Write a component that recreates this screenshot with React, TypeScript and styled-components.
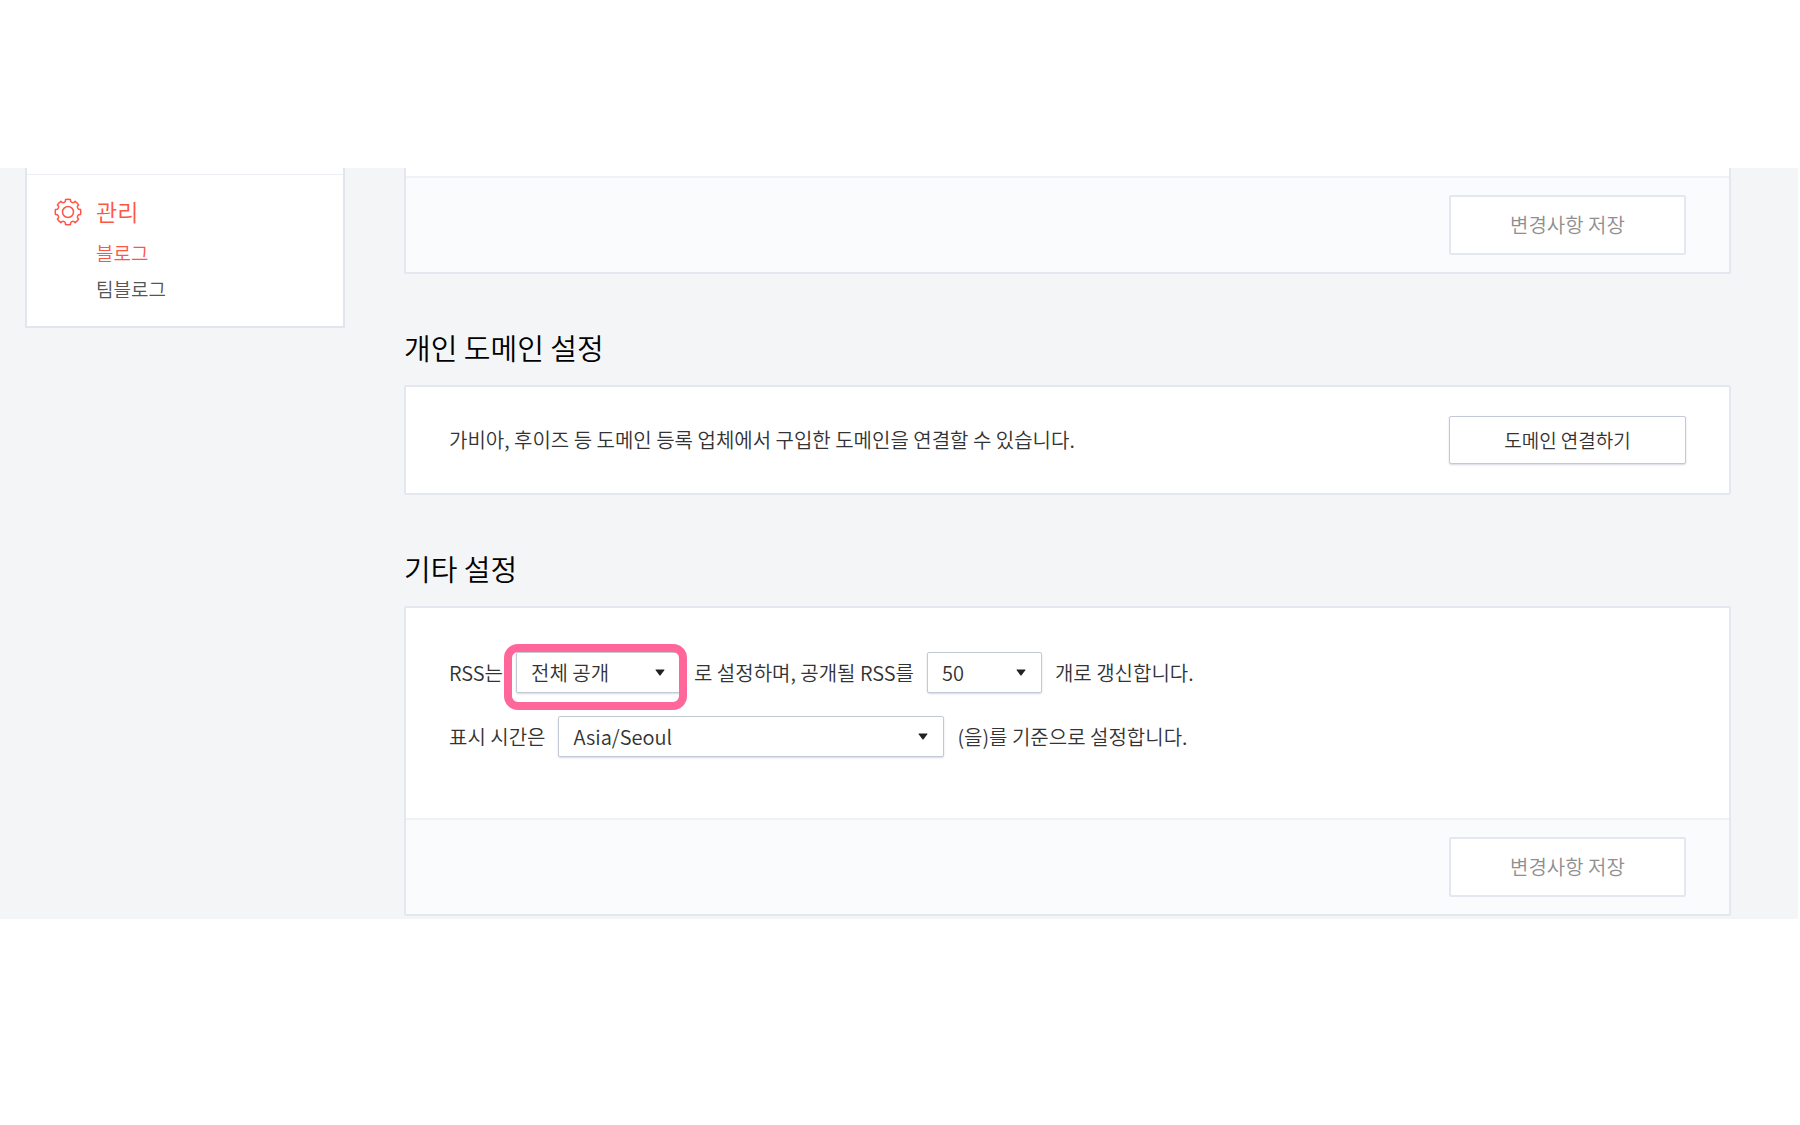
import React from "react";
import styled, { createGlobalStyle } from "styled-components";

const GlobalStyle = createGlobalStyle`
  *, *::before, *::after { box-sizing: border-box; }
  body {
    margin: 0;
    background: #fff;
    color: #333;
    font-family: "Noto Sans CJK KR", "Noto Sans", sans-serif;
    font-size: 20px;
    font-weight: 350;
    line-height: 30px;
  }
  button, select { font: inherit; color: inherit; }
`;

const Page = styled.div`
  padding: 168px 2px 206px 0;
`;

const Admin = styled.div`
  display: flex;
  align-items: flex-start;
  gap: 59px;
  padding: 0 67px 3px 25px;
  background: #f3f5f7;
`;

const Sidebar = styled.nav`
  flex: 0 0 320px;
  padding-top: 6px;
  background: #fff;
  border: solid #e1e5ee;
  border-width: 0 2px 2px;
`;

const MenuGroup = styled.section`
  display: grid;
  grid-template-columns: 28px 1fr;
  column-gap: 14px;
  align-items: center;
  padding: 18px 27px 19px;
  border-top: 1px solid #eceef3;
`;

const MenuTitle = styled.h2`
  margin: 0;
  padding-bottom: 2px;
  font-size: 23px;
  line-height: 36px;
  font-weight: inherit;
  color: #ff5544;
`;

const MenuList = styled.ul`
  grid-column: 2;
  margin: 4px 0 0;
  padding: 0;
  list-style: none;
`;

const MenuLink = styled.a<{ $active?: boolean }>`
  display: block;
  font-size: 19px;
  line-height: 36px;
  text-decoration: none;
  color: ${(p) => (p.$active ? "#ff5544" : "#555")};
`;

const Main = styled.main`
  flex: 1;
  min-width: 0;
`;

const Title = styled.h3`
  margin: 0;
  padding: 53px 0 18px;
  font-size: 29px;
  line-height: 40px;
  font-weight: inherit;
  color: #000;
`;

const Panel = styled.section<{ $cut?: boolean }>`
  background: #fff;
  border: 2px solid #e3e7ef;
  border-top-width: ${(p) => (p.$cut ? 0 : 2)}px;
  border-radius: ${(p) => (p.$cut ? "0 0 2px 2px" : "2px")};
  padding-top: ${(p) => (p.$cut ? 8 : 0)}px;
`;

const DomainRow = styled.div`
  display: flex;
  align-items: center;
  justify-content: space-between;
  padding: 29px 43px;
`;

const Text = styled.p`
  margin: 0;
`;

const Button = styled.button<{ $muted?: boolean }>`
  width: 237px;
  height: ${(p) => (p.$muted ? 60 : 48)}px;
  padding: 0;
  background: #fff;
  border: ${(p) => (p.$muted ? "2px solid #e3e7ef" : "1px solid #c3cad6")};
  border-radius: 2px;
  box-shadow: ${(p) => (p.$muted ? "none" : "0 1px 2px #d5dae2")};
  color: ${(p) => (p.$muted ? "#8f8f8f" : "#333")};
  font-size: ${(p) => (p.$muted ? 20 : 19)}px;
`;

const Footer = styled.footer`
  display: flex;
  justify-content: flex-end;
  padding: 17px 43px;
  background: #fafbfd;
  border-top: 2px solid #f0f1f4;
`;

const Form = styled.form`
  display: grid;
  gap: 23px;
  padding: 44px 43px 61px;
`;

const Row = styled.div`
  display: flex;
  align-items: center;
  gap: 13px;
`;

const SelectBox = styled.div<{ $width: number }>`
  position: relative;
  width: ${(p) => p.$width}px;
`;

const Select = styled.select`
  display: block;
  width: 100%;
  height: 41px;
  padding: 0 36px 0 14px;
  appearance: none;
  background: #fff;
  border: 1px solid #c3cad6;
  border-radius: 2px;
  box-shadow: 0 1px 2px #d5dae2;
`;

const Arrow = styled.svg`
  position: absolute;
  top: 17px;
  right: 16px;
  width: 10px;
  height: 7px;
  pointer-events: none;
`;

const Highlight = styled.span`
  position: absolute;
  inset: -8px -6px -17px -12px;
  border: 8px solid #ff6699;
  border-radius: 14px;
  pointer-events: none;
`;

const gearPath = (() => {
  const teeth = 8;
  const points: string[] = [];
  const at = (radius: number, degrees: number) => {
    const a = (degrees * Math.PI) / 180;
    return `${(14 + radius * Math.sin(a)).toFixed(2)} ${(14 - radius * Math.cos(a)).toFixed(2)}`;
  };
  for (let i = 0; i < teeth; i++) {
    const c = (i * 360) / teeth;
    points.push(`${i ? "L" : "M"}${at(12.8, c - 11)}`);
    points.push(`A12.8 12.8 0 0 1 ${at(12.8, c + 11)}`);
    points.push(`L${at(11, c + 14)}`);
    points.push(`Q${at(9.8, c + 22.5)} ${at(11, c + 31)}`);
  }
  return points.join(" ") + "Z";
})();

function GearIcon() {
  return (
    <svg width="28" height="28" viewBox="0 0 28 28" fill="none" stroke="#ff5544" strokeWidth="1.5" strokeLinejoin="round" aria-hidden="true">
      <path d={gearPath} />
      <circle cx="14" cy="14" r="5.5" />
    </svg>
  );
}

function Dropdown({ label, value, width, marked }: { label: string; value: string; width: number; marked?: boolean }) {
  return (
    <SelectBox $width={width}>
      <Select aria-label={label} defaultValue={value}>
        <option value={value}>{value}</option>
      </Select>
      <Arrow viewBox="0 0 10 7" aria-hidden="true">
        <path d="M1 0.5H9Q9.8 0.5 9.3 1.3L5.6 6.2Q5 6.9 4.4 6.2L0.7 1.3Q0.2 0.5 1 0.5Z" fill="#222" />
      </Arrow>
      {marked && <Highlight />}
    </SelectBox>
  );
}

export default function App() {
  return (
    <Page>
      <GlobalStyle />
      <Admin>
        <Sidebar>
          <MenuGroup>
            <GearIcon />
            <MenuTitle>관리</MenuTitle>
            <MenuList>
              <li><MenuLink href="#blog" $active>블로그</MenuLink></li>
              <li><MenuLink href="#team">팀블로그</MenuLink></li>
            </MenuList>
          </MenuGroup>
        </Sidebar>
        <Main>
          <Panel $cut>
            <Footer><Button type="button" $muted>변경사항 저장</Button></Footer>
          </Panel>
          <Title>개인 도메인 설정</Title>
          <Panel>
            <DomainRow>
              <Text>가비아, 후이즈 등 도메인 등록 업체에서 구입한 도메인을 연결할 수 있습니다.</Text>
              <Button type="button">도메인 연결하기</Button>
            </DomainRow>
          </Panel>
          <Title>기타 설정</Title>
          <Panel>
            <Form>
              <Row>
                <span>RSS는</span>
                <Dropdown label="RSS 공개 범위" value="전체 공개" width={165} marked />
                <span>로 설정하며, 공개될 RSS를</span>
                <Dropdown label="RSS 개수" value="50" width={115} />
                <span>개로 갱신합니다.</span>
              </Row>
              <Row>
                <span>표시 시간은</span>
                <Dropdown label="표시 시간" value="Asia/Seoul" width={386} />
                <span>(을)를 기준으로 설정합니다.</span>
              </Row>
            </Form>
            <Footer><Button type="button" $muted>변경사항 저장</Button></Footer>
          </Panel>
        </Main>
      </Admin>
    </Page>
  );
}
